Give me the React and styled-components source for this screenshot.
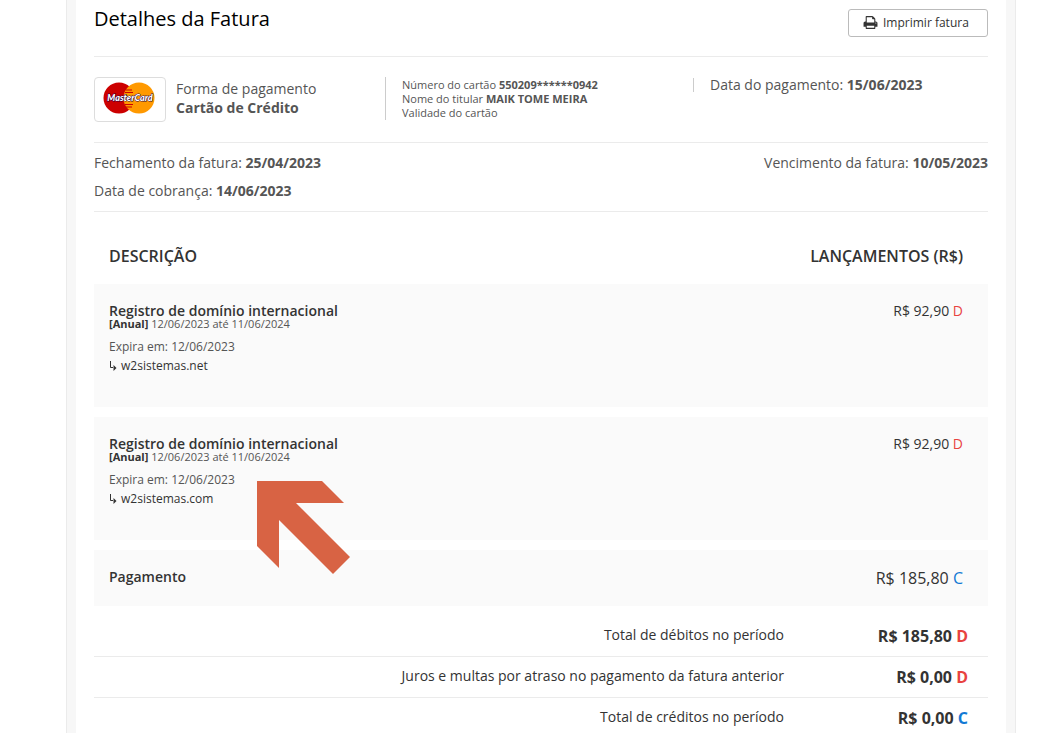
import React from 'react'
import styled, { createGlobalStyle } from 'styled-components'

const GlobalStyle = createGlobalStyle`
    * {
        box-sizing: border-box;
    }
    body {
        margin: 0;
        background: #fff;
        color: #333;
        font-family: "Open Sans", sans-serif;
        font-size: 14px;
    }
    strong {
        font-weight: 700;
    }
`
const Page = styled.div`
    min-height: 100vh;
    padding: 0 31px 0 66px;
    display: flex;
`
const Panel = styled.main`
    flex: 1;
    padding: 0 18px;
    background: #fff;
    border: solid #f7f7f7;
    border-width: 0 9px;
    outline: 1px solid #ebebeb;
    margin: 0 1px;
`
const Header = styled.header`
    display: flex;
    justify-content: space-between;
    align-items: flex-start;
    height: 57px;
    padding-top: 9px;
    border-bottom: 1px solid #ebebeb;
`
const Title = styled.h1`
    margin: 0;
    color: #000;
    font-size: 20px;
    font-weight: 400;
    line-height: 20px;
`
const PrintButton = styled.button`
    display: flex;
    align-items: center;
    gap: 5px;
    width: 140px;
    height: 28px;
    padding: 0 0 1px 14px;
    background: #fff;
    border: 1px solid #bbb;
    border-radius: 3px;
    color: #333;
    font-family: inherit;
    font-size: 12px;
    cursor: pointer;
`
const Payment = styled.section`
    display: grid;
    grid-template-columns: 291fr 308fr 295fr;
    align-items: start;
    padding: 20px 0;
    border-bottom: 1px solid #ebebeb;
    color: #555;
`
const Method = styled.div`
    display: flex;
    gap: 10px;
    line-height: 19px;
`
const CardBrand = styled.span`
    display: flex;
    justify-content: center;
    width: 72px;
    height: 45px;
    padding-top: 4px;
    border: 1px solid #ddd;
    border-radius: 4px;
`
const MethodText = styled.div`
    padding-top: 2px;
    strong {
        display: block;
    }
`
const CardInfo = styled.div`
    padding: 1px 0 0 16px;
    border-left: 1px solid #ccc;
    font-size: 11px;
    line-height: 14px;
`
const PaidAt = styled.div`
    margin-top: 1px;
    padding-left: 16px;
    border-left: 1px solid #ccc;
    line-height: 14px;
`
const Dates = styled.section`
    display: flex;
    justify-content: space-between;
    padding: 6px 0;
    border-bottom: 1px solid #ebebeb;
    color: #555;
    line-height: 28px;
    p {
        margin: 0;
    }
`
const Entries = styled.table`
    width: 100%;
    margin-top: 12px;
    border-spacing: 0 10px;
`
const HeadCell = styled.th`
    padding: 10px 25px 6px 15px;
    font-size: 16px;
    font-weight: 600;
    line-height: 24px;
    text-align: ${props => props.$right ? 'right' : 'left'};
`
const Cell = styled.td`
    position: relative;
    padding: 20px 15px;
    background: #fafafa;
    vertical-align: top;
`
const EntryCell = styled(Cell)`
    height: 123px;
`
const Amount = styled(Cell)`
    padding: 17px 25px 17px 15px;
    font-size: ${props => props.$large ? '16px' : '14px'};
    line-height: ${props => props.$large ? '22px' : '20px'};
    text-align: right;
`
const Kind = styled.span`
    color: ${props => props.$kind === 'D' ? '#e8433f' : '#1279d4'};
`
const EntryName = styled.div`
    font-weight: 600;
    line-height: 14px;
`
const Period = styled.div`
    color: #555;
    font-size: 11px;
    line-height: 12px;
    strong {
        color: #333;
    }
`
const Expires = styled.div`
    margin-top: 7px;
    color: #555;
    font-size: 12px;
    line-height: 20px;
`
const Domain = styled.div`
    display: flex;
    align-items: center;
    gap: 3px;
    font-size: 12px;
    line-height: 18px;
`
const Pointer = styled.svg`
    position: absolute;
    top: 64px;
    left: 163px;
    z-index: 1;
`
const Totals = styled.table`
    width: 100%;
    border-spacing: 0;
    td, th {
        height: 41px;
        border-bottom: 1px solid #ebebeb;
        text-align: right;
    }
    th {
        padding: 0 0 4px;
        font-weight: 400;
    }
    td {
        width: 204px;
        padding: 0 20px 0 0;
        font-size: 16px;
        font-weight: 700;
    }
`

const entries = [
    { name: 'Registro de domínio internacional', domain: 'w2sistemas.net', price: 'R$ 92,90' },
    { name: 'Registro de domínio internacional', domain: 'w2sistemas.com', price: 'R$ 92,90', marked: true },
]

const totals = [
    { label: 'Total de débitos no período', value: 'R$ 185,80', kind: 'D' },
    { label: 'Juros e multas por atraso no pagamento da fatura anterior', value: 'R$ 0,00', kind: 'D' },
    { label: 'Total de créditos no período', value: 'R$ 0,00', kind: 'C' },
]

const PrintIcon = () => (
    <svg width="15" height="15" viewBox="0 0 1792 1792" fill="#333" aria-hidden="true">
        <path d="M448 1536h896v-256h-896v256zM448 896h896v-384h-160q-40 0-68-28t-28-68v-160h-640v640zM1600 960q0-26-19-45t-45-19-45 19-19 45 19 45 45 19 45-19 19-45zM1728 960v416q0 13-9.5 22.5t-22.5 9.5h-224v160q0 40-28 68t-68 28h-960q-40 0-68-28t-28-68v-160h-224q-13 0-22.5-9.5t-9.5-22.5v-416q0-79 56.5-135.5t135.5-56.5h64v-544q0-40 28-68t68-28h672q40 0 88 20t76 48l152 152q28 28 48 76t20 88v256h64q79 0 135.5 56.5t56.5 135.5z" />
    </svg>
)

const MasterCard = () => (
    <svg width="54" height="32" viewBox="0 0 54 32" role="img" aria-label="MasterCard">
        <circle cx="16" cy="16" r="15.5" fill="#c00" />
        <circle cx="36" cy="16" r="15.5" fill="#f90" />
        <path d="M23 8h6M22 10.5h8M22 22.5h8M23 25h6" stroke="#c00" strokeWidth="1.2" />
        <text
            x="27"
            y="19"
            textAnchor="middle"
            fill="#fff"
            stroke="#204"
            strokeWidth="1"
            paintOrder="stroke"
            fontFamily="Lato, sans-serif"
            fontSize="9"
            fontWeight="900"
            fontStyle="italic"
        >
            MasterCard
        </text>
    </svg>
)

const BranchIcon = () => (
    <svg width="9" height="10" viewBox="0 0 9 10" aria-hidden="true">
        <path d="M1.5 0v6.5H4" fill="none" stroke="#333" />
        <path d="M4.5 4L7.5 7L4.5 10z" fill="#333" />
    </svg>
)

export default function App() {
    return (
        <>
            <GlobalStyle />
            <Page>
                <Panel>
                    <Header>
                        <Title>Detalhes da Fatura</Title>
                        <PrintButton type="button"><PrintIcon />Imprimir fatura</PrintButton>
                    </Header>
                    <Payment>
                        <Method>
                            <CardBrand><MasterCard /></CardBrand>
                            <MethodText>Forma de pagamento <strong>Cartão de Crédito</strong></MethodText>
                        </Method>
                        <CardInfo>
                            <div>Número do cartão <strong>550209******0942</strong></div>
                            <div>Nome do titular <strong>MAIK TOME MEIRA</strong></div>
                            <div>Validade do cartão</div>
                        </CardInfo>
                        <PaidAt>Data do pagamento: <strong>15/06/2023</strong></PaidAt>
                    </Payment>
                    <Dates>
                        <div>
                            <p>Fechamento da fatura: <strong>25/04/2023</strong></p>
                            <p>Data de cobrança: <strong>14/06/2023</strong></p>
                        </div>
                        <p>Vencimento da fatura: <strong>10/05/2023</strong></p>
                    </Dates>
                    <Entries>
                        <thead>
                            <tr>
                                <HeadCell scope="col">DESCRIÇÃO</HeadCell>
                                <HeadCell scope="col" $right>LANÇAMENTOS (R$)</HeadCell>
                            </tr>
                        </thead>
                        <tbody>
                            {entries.map(entry => (
                                <tr key={entry.domain}>
                                    <EntryCell>
                                        <EntryName>{entry.name}</EntryName>
                                        <Period><strong>[Anual]</strong> 12/06/2023 até 11/06/2024</Period>
                                        <Expires>Expira em: 12/06/2023</Expires>
                                        <Domain><BranchIcon />{entry.domain}</Domain>
                                        {entry.marked && (
                                            <Pointer width="93" height="93" viewBox="0 0 93 93" aria-hidden="true">
                                                <path d="M0 0H65L87 22H39L93 76L76 93L22 39V87L0 65z" fill="#d86344" />
                                            </Pointer>
                                        )}
                                    </EntryCell>
                                    <Amount>{entry.price} <Kind $kind="D">D</Kind></Amount>
                                </tr>
                            ))}
                            <tr>
                                <Cell><EntryName>Pagamento</EntryName></Cell>
                                <Amount $large>R$ 185,80 <Kind $kind="C">C</Kind></Amount>
                            </tr>
                        </tbody>
                    </Entries>
                    <Totals>
                        <tbody>
                            {totals.map(total => (
                                <tr key={total.label}>
                                    <th scope="row">{total.label}</th>
                                    <td>{total.value} <Kind $kind={total.kind}>{total.kind}</Kind></td>
                                </tr>
                            ))}
                        </tbody>
                    </Totals>
                </Panel>
            </Page>
        </>
    )
}
